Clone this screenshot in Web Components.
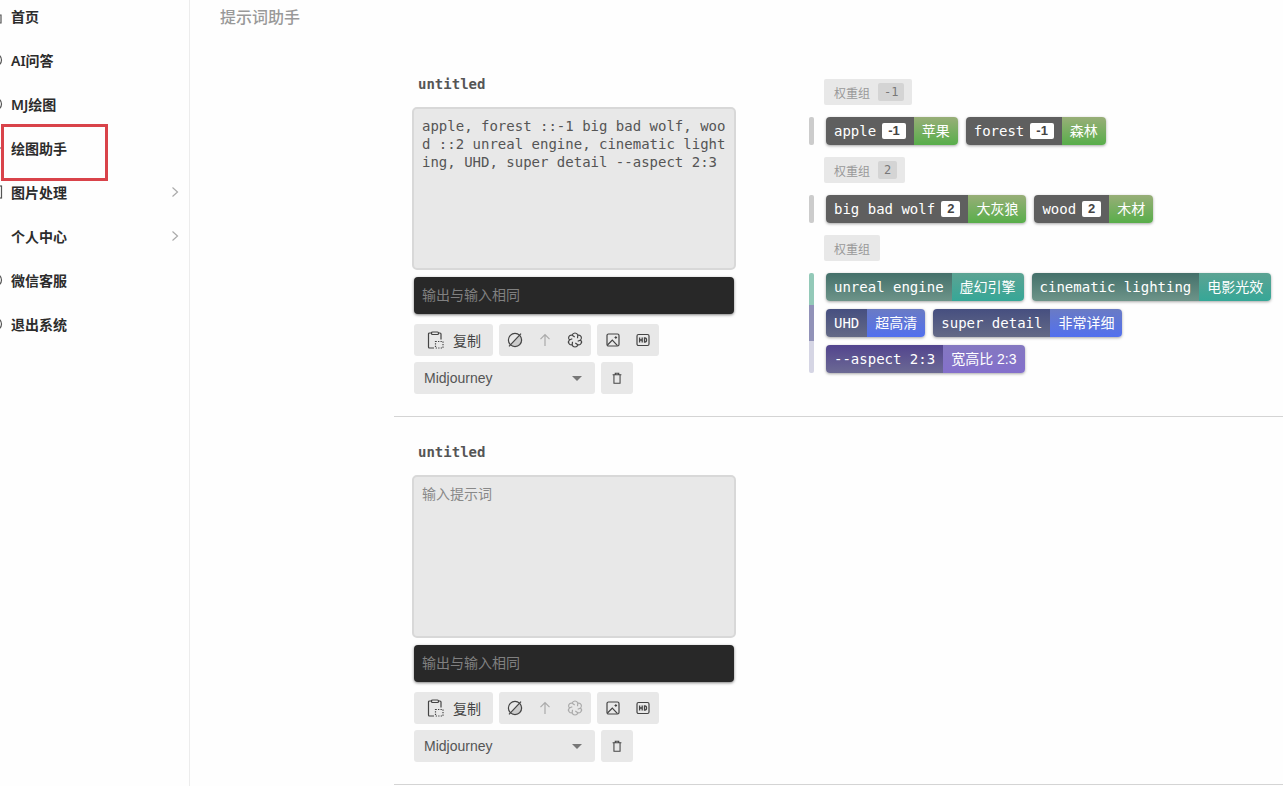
<!DOCTYPE html>
<html lang="zh-CN">
<head>
<meta charset="UTF-8">
<meta name="viewport" content="width=device-width, initial-scale=1">
<title>提示词助手</title>
<style>
    body {
        margin: 0;
        background: #fefefe;
        color: #333;
        font-family: "Liberation Sans", "Noto Sans CJK SC", sans-serif;
        font-size: 14px;
    }
</style>
</head>
<body>
<app-shell>
    <side-menu slot="menu">
        <menu-item icon="home">首页</menu-item>
        <menu-item icon="chat">AI问答</menu-item>
        <menu-item icon="chat">MJ绘图</menu-item>
        <menu-item icon="line" marked>绘图助手</menu-item>
        <menu-item icon="image" expandable>图片处理</menu-item>
        <menu-item expandable>个人中心</menu-item>
        <menu-item icon="chat">微信客服</menu-item>
        <menu-item icon="power">退出系统</menu-item>
    </side-menu>
    <span slot="title">提示词助手</span>

    <prompt-workspace>
        <prompt-editor slot="editor" name="untitled" value="apple, forest ::-1 big bad wolf, wood ::2 unreal engine, cinematic lighting, UHD, super detail --aspect 2:3"></prompt-editor>
        <weight-tag weight="-1"></weight-tag>
        <token-group>
            <token-line>
                <prompt-token weight="-1" text="苹果">apple</prompt-token>
                <prompt-token weight="-1" text="森林">forest</prompt-token>
            </token-line>
        </token-group>
        <weight-tag weight="2"></weight-tag>
        <token-group>
            <token-line>
                <prompt-token weight="2" text="大灰狼">big bad wolf</prompt-token>
                <prompt-token weight="2" text="木材">wood</prompt-token>
            </token-line>
        </token-group>
        <weight-tag></weight-tag>
        <token-group kind="mixed">
            <token-line>
                <prompt-token kind="style" text="虚幻引擎">unreal engine</prompt-token>
                <prompt-token kind="style" text="电影光效">cinematic lighting</prompt-token>
            </token-line>
            <token-line>
                <prompt-token kind="quality" text="超高清">UHD</prompt-token>
                <prompt-token kind="quality" text="非常详细">super detail</prompt-token>
            </token-line>
            <token-line>
                <prompt-token kind="command" text="宽高比 2:3">--aspect 2:3</prompt-token>
            </token-line>
        </token-group>
    </prompt-workspace>

    <prompt-workspace>
        <prompt-editor slot="editor" name="untitled" value=""></prompt-editor>
    </prompt-workspace>
</app-shell>

<script>
const icons = {
    home: '<path d="M2 7h12v8H2z"/>',
    chat: '<circle cx="8.5" cy="8" r="6"/>',
    line: '<path d="M2 8h13"/>',
    image: '<rect x="2" y="2" width="12.500" height="12"/>',
    power: '<circle cx="8.500" cy="8" r="6"/><path d="M8 4v5"/>',
    arrow: '<path d="M5.5 3.5L10.5 8l-5 4.5"/>',
    copy: '<path d="M8 17H3.500a1 1 0 0 1-1-1V3a1 1 0 0 1 1-1h2M12.500 2h1.500a1 1 0 0 1 1 1v5.500"/><rect x="5.500" y="1" width="7" height="2.500" rx="1"/><path d="M9.500 10.500h7.500v6.500h-7.500z" stroke-dasharray="1.300 1.200"/>',
    ban: '<path d="M13.2 3.2A7 7 0 0 1 3.2 13.2z" fill="#ccc" stroke="none"/><circle cx="8" cy="8" r="6.600"/><path d="M14 1.600L2 14.400"/>',
    up: '<path d="M8 14V3M3.5 7.200L8 2.600l4.500 4.600"/>',
    openai: '<path d="M13.600 8A2.900 2.900 0 0 1 10.800 12.850A2.900 2.900 0 0 1 5.200 12.850A2.900 2.900 0 0 1 2.400 8A2.900 2.900 0 0 1 5.200 3.150A2.900 2.900 0 0 1 10.800 3.150A2.900 2.900 0 0 1 13.600 8L10.700 9.300M10.800 12.850L8.300 11M5.200 12.850L5.500 9.700M2.400 8L5.300 6.700M5.200 3.150L7.700 5M10.800 3.150L10.500 6.300"/>',
    picture: '<rect x="2" y="2" width="12" height="12" rx="1.500"/><path d="M2.500 13L7.300 8l5.200 5.600"/><path d="M10.800 4.200v2.600M9.500 5.500h2.600"/>',
    hd: '<rect x="2" y="2.500" width="12" height="11" rx="1.500"/><path d="M4.600 5.500v5M7.200 5.500v5M4.600 8h2.600M9.500 6v4h.7c1.900 0 1.900-4 0-4z" stroke-width="1.300"/>',
    trash: '<path d="M4.500 4.500v9.500h7V4.500M3 4.200h10M6 4V2.500h4V4"/>'
};

function icon(name, size = 16) {
    const box = name === 'copy' ? 18 : 16;
    return `<svg width="${size}" height="${size}" viewBox="0 0 ${box} ${box}" fill="none" stroke="currentColor" stroke-width="1.2" aria-hidden="true">${icons[name]}</svg>`;
}

class AppShell extends HTMLElement {
    constructor() {
        super();
        this.attachShadow({ mode: 'open' });
        this.shadowRoot.innerHTML = `
            <style>
                :host {
                    display: grid;
                    grid-template-columns: 190px minmax(0, 1fr);
                    min-height: 100vh;
                }
                aside {
                    border-right: 1px solid #ececec;
                    overflow: hidden;
                }
                h1 {
                    margin: 0;
                    padding: 6px 30px 19px;
                    font-size: 16px;
                    line-height: 24px;
                    font-weight: 500;
                    color: #999;
                }
                .content {
                    padding-left: 204px;
                }
            </style>
            <aside><slot name="menu"></slot></aside>
            <main>
                <h1><slot name="title"></slot></h1>
                <div class="content"><slot></slot></div>
            </main>
        `;
    }
}

class SideMenu extends HTMLElement {
    constructor() {
        super();
        this.attachShadow({ mode: 'open' });
        this.shadowRoot.innerHTML = `
            <style>
                /* the menu is scrolled a little, so its edges are cut off */
                :host {
                    display: block;
                    margin: -6px 0 0 -13px;
                }
                nav {
                    display: flex;
                    flex-direction: column;
                }
            </style>
            <nav><slot></slot></nav>
        `;
    }
}

class MenuItem extends HTMLElement {
    constructor() {
        super();
        this.attachShadow({ mode: 'open' });
        const name = this.getAttribute('icon');
        this.shadowRoot.innerHTML = `
            <style>
                :host {
                    display: block;
                    position: relative;
                }
                a {
                    display: flex;
                    align-items: center;
                    height: 44px;
                    padding-right: 6px;
                    color: #2c2c2c;
                    font-family: "Noto Sans", "Noto Sans CJK SC", sans-serif;
                    font-weight: 600;
                    text-decoration: none;
                }
                .icon {
                    display: flex;
                    width: 24px;
                    color: #555;
                }
                .arrow {
                    display: flex;
                    margin-left: auto;
                    color: #aaa;
                }
                .mark {
                    position: absolute;
                    left: 14px;
                    top: -2px;
                    width: 101px;
                    height: 51px;
                    border: 3px solid #d9434a;
                    pointer-events: none;
                }
            </style>
            <a href="#">
                <span class="icon">${name ? icon(name) : ''}</span>
                <slot></slot>
                ${this.hasAttribute('expandable') ? `<span class="arrow">${icon('arrow')}</span>` : ''}
            </a>
            ${this.hasAttribute('marked') ? '<div class="mark"></div>' : ''}
        `;
    }
}

class PromptWorkspace extends HTMLElement {
    constructor() {
        super();
        this.attachShadow({ mode: 'open' });
        this.shadowRoot.innerHTML = `
            <style>
                :host {
                    display: grid;
                    grid-template-columns: 324px minmax(0, 1fr);
                    gap: 73px;
                    padding: 26px 0 22px 18px;
                    border-bottom: 1px solid #d4d4d4;
                }
                .tokens {
                    display: flex;
                    flex-direction: column;
                    align-items: flex-start;
                    gap: 12px;
                    padding-top: 4px;
                }
            </style>
            <slot name="editor"></slot>
            <div class="tokens"><slot></slot></div>
        `;
    }
}

class PromptEditor extends HTMLElement {
    constructor() {
        super();
        this.attachShadow({ mode: 'open' });
        const value = this.getAttribute('value');
        this.shadowRoot.innerHTML = `
            <style>
                :host {
                    display: block;
                }
                h2 {
                    margin: 0 6px 14px;
                    font: bold 14px/18px "DejaVu Sans Mono", monospace;
                    color: #555;
                }
                textarea {
                    display: block;
                    box-sizing: border-box;
                    width: 100%;
                    height: 163px;
                    padding: 8px;
                    border: 2px solid #d8d8d8;
                    border-radius: 5px;
                    background: #e8e8e8;
                    color: #555;
                    font: 14px/18px "DejaVu Sans Mono", "Noto Sans CJK SC", monospace;
                    word-break: break-all;
                    overflow: hidden;
                    resize: none;
                }
                textarea::placeholder {
                    color: #888;
                }
                .output {
                    margin: 7px 2px 10px;
                    padding: 0 8px;
                    border-radius: 4px;
                    background: #282828;
                    box-shadow: 0 1px 3px rgba(0, 0, 0, 0.5);
                    color: #808080;
                    line-height: 37px;
                }
                .row {
                    display: flex;
                    gap: 6px;
                    margin: 0 2px 6px;
                }
                .row:last-child {
                    margin-bottom: 0;
                }
                .group {
                    display: flex;
                    padding: 0 1px;
                    border-radius: 3px;
                    background: #e8e8e8;
                }
                button {
                    display: flex;
                    align-items: center;
                    justify-content: center;
                    width: 30px;
                    height: 32px;
                    padding: 0;
                    border: 0;
                    border-radius: 3px;
                    background: #e8e8e8;
                    color: #444;
                    font: inherit;
                }
                button:disabled {
                    color: #aaa;
                }
                .copy {
                    width: auto;
                    padding: 0 12px;
                    gap: 9px;
                }
                .select {
                    display: grid;
                    align-items: center;
                    width: 181px;
                }
                select {
                    grid-area: 1 / 1;
                    height: 32px;
                    padding: 0 10px;
                    border: 0;
                    border-radius: 3px;
                    background: #e8e8e8;
                    color: #555;
                    font: inherit;
                    appearance: none;
                }
                .caret {
                    grid-area: 1 / 1;
                    justify-self: end;
                    margin-right: 13px;
                    border: 5px solid transparent;
                    border-top-color: #777;
                    border-bottom: 0;
                    pointer-events: none;
                }
            </style>
            <h2>${this.getAttribute('name')}</h2>
            <textarea aria-label="提示词" placeholder="输入提示词" spellcheck="false">${value}</textarea>
            <div class="output">输出与输入相同</div>
            <div class="row">
                <button class="copy">${icon('copy', 18)}复制</button>
                <div class="group">
                    <button aria-label="禁用">${icon('ban')}</button>
                    <button aria-label="上移" disabled>${icon('up')}</button>
                    <button aria-label="翻译" ${value ? '' : 'disabled'}>${icon('openai')}</button>
                </div>
                <div class="group">
                    <button aria-label="图片">${icon('picture')}</button>
                    <button aria-label="高清">${icon('hd')}</button>
                </div>
            </div>
            <div class="row">
                <div class="select">
                    <select aria-label="解析器"><option>Midjourney</option></select>
                    <span class="caret"></span>
                </div>
                <div class="group"><button aria-label="删除">${icon('trash', 14)}</button></div>
            </div>
        `;
    }
}

class WeightTag extends HTMLElement {
    constructor() {
        super();
        this.attachShadow({ mode: 'open' });
        const weight = this.getAttribute('weight');
        this.shadowRoot.innerHTML = `
            <style>
                :host {
                    display: flex;
                    align-items: center;
                    gap: 8px;
                    height: 26px;
                    margin-left: 15px;
                    padding: 0 10px;
                    border-radius: 2px;
                    background: #e8e8e8;
                    color: #999;
                    font-size: 12px;
                }
                :host([weight]) {
                    padding-right: 8px;
                }
                span {
                    padding: 0 6px;
                    border-radius: 2px;
                    background: #d4d4d4;
                    color: #777;
                    font-family: "DejaVu Sans Mono", monospace;
                    line-height: 18px;
                }
            </style>
            权重组${weight ? `<span>${weight}</span>` : ''}
        `;
    }
}

class TokenGroup extends HTMLElement {
    constructor() {
        super();
        this.attachShadow({ mode: 'open' });
        this.shadowRoot.innerHTML = `
            <style>
                :host {
                    display: flex;
                    gap: 12px;
                    --bar: #ccc;
                }
                /* one colour per line of tokens */
                :host([kind="mixed"]) {
                    --bar: linear-gradient(#93c9b8 32px, #9192b8 32px 68px, #d5d5e4 68px);
                }
                .bar {
                    width: 5px;
                    border-radius: 2px;
                    background: var(--bar);
                }
                .lines {
                    display: flex;
                    flex-direction: column;
                    gap: 8px;
                }
            </style>
            <div class="bar"></div>
            <div class="lines"><slot></slot></div>
        `;
    }
}

class TokenLine extends HTMLElement {
    constructor() {
        super();
        this.attachShadow({ mode: 'open' });
        this.shadowRoot.innerHTML = `
            <style>
                :host {
                    display: flex;
                    gap: 8px;
                }
            </style>
            <slot></slot>
        `;
    }
}

class PromptToken extends HTMLElement {
    constructor() {
        super();
        this.attachShadow({ mode: 'open' });
        const weight = this.getAttribute('weight');
        this.shadowRoot.innerHTML = `
            <style>
                :host {
                    display: flex;
                    height: 28px;
                    border-radius: 4px;
                    overflow: hidden;
                    box-shadow: 0 1px 3px rgba(0, 0, 0, 0.35);
                    color: #fff;
                    line-height: 28px;
                    white-space: nowrap;
                    --word: #5f5f5f;
                    --trans: linear-gradient(#98ae78, #58ae4a);
                }
                :host([kind="style"]) {
                    --word: linear-gradient(#44706a, #6d9489);
                    --trans: linear-gradient(#5ca393, #36a797);
                }
                :host([kind="quality"]) {
                    --word: linear-gradient(#464f80, #646a86);
                    --trans: linear-gradient(#6a7bc4, #5270ee);
                }
                :host([kind="command"]) {
                    --word: linear-gradient(#52448e, #6c6a94);
                    --trans: linear-gradient(#8478c0, #8470cc);
                }
                .word {
                    display: flex;
                    align-items: center;
                    gap: 6px;
                    padding: 0 8px;
                    background: var(--word);
                    font-family: "DejaVu Sans Mono", monospace;
                }
                .weight {
                    padding: 0 6px;
                    border-radius: 2px;
                    background: #fff;
                    color: #444;
                    font: bold 13px/16px "Liberation Sans", sans-serif;
                }
                .trans {
                    padding: 0 8px;
                    background: var(--trans);
                }
            </style>
            <span class="word"><slot></slot>${weight ? `<span class="weight">${weight}</span>` : ''}</span>
            <span class="trans">${this.getAttribute('text')}</span>
        `;
    }
}

customElements.define('app-shell', AppShell);
customElements.define('side-menu', SideMenu);
customElements.define('menu-item', MenuItem);
customElements.define('prompt-workspace', PromptWorkspace);
customElements.define('prompt-editor', PromptEditor);
customElements.define('weight-tag', WeightTag);
customElements.define('token-group', TokenGroup);
customElements.define('token-line', TokenLine);
customElements.define('prompt-token', PromptToken);
</script>
</body>
</html>
